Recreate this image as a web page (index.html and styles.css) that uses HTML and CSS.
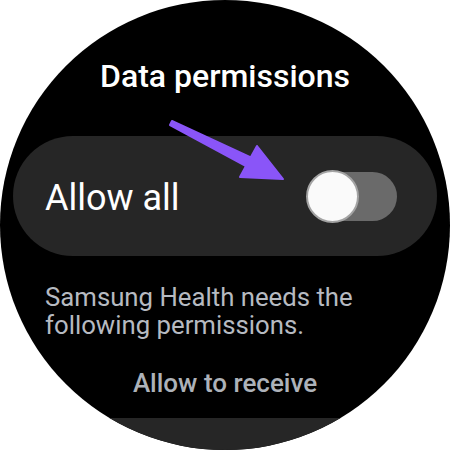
FILE: index.html
```html
<!DOCTYPE html>
<html>
<head>
<meta charset="utf-8">
<link rel="stylesheet" href="styles.css">
</head>
<body>
<div class="watch">
  <h1 class="title">Data permissions</h1>
  <div class="card">
    <span class="label">Allow all</span>
    <div class="track"><div class="thumb"></div></div>
  </div>
  <p class="desc">Samsung Health needs the following permissions.</p>
  <h2 class="section">Allow to receive</h2>
  <div class="card card-next"></div>
  <svg class="arrow" width="450" height="450" viewBox="0 0 450 450">
    <polygon points="172,121 250.8,157.3 257,146 283,179 240,177 246,166 170,125" fill="#8a55f8" stroke="#8a55f8" stroke-width="2" stroke-linejoin="round"/>
  </svg>
</div>
</body>
</html>
```
FILE: styles.css
```css
html, body {
  margin: 0;
  padding: 0;
  background: #ffffff;
}
.watch {
  position: relative;
  width: 450px;
  height: 450px;
  border-radius: 50%;
  background: #000000;
  overflow: hidden;
  display: flex;
  flex-direction: column;
  font-family: Roboto, "Noto Sans", sans-serif;
}
.title {
  margin: 58px 0 0;
  font-size: 32px;
  line-height: 36px;
  font-weight: 500;
  color: #ffffff;
  text-align: center;
}
.card {
  margin: 42px 13px 0;
  height: 120px;
  flex-shrink: 0;
  border-radius: 60px;
  background: #262626;
  display: flex;
  align-items: center;
  justify-content: space-between;
  padding: 0 40px 0 32px;
}
.label {
  font-size: 36px;
  line-height: 43px;
  color: #ffffff;
  padding-top: 5px;
}
.track {
  width: 90px;
  height: 49px;
  border-radius: 25px;
  background: #6a6a6a;
  display: flex;
  align-items: center;
}
.thumb {
  flex-shrink: 0;
  width: 49px;
  height: 49px;
  border-radius: 50%;
  background: #fafafa;
  border: 2px solid #a3a3a3;
  margin-left: -1px;
}
.desc {
  margin: 27px 0 0 45px;
  width: 340px;
  font-size: 25.75px;
  line-height: 28px;
  color: #b6bac1;
}
.section {
  margin: 30px 0 0;
  font-size: 26px;
  line-height: 28px;
  font-weight: 500;
  color: #adb2b9;
  text-align: center;
}
.card-next {
  margin-top: 21px;
}
.arrow {
  position: absolute;
  left: 0;
  top: 0;
}
```
